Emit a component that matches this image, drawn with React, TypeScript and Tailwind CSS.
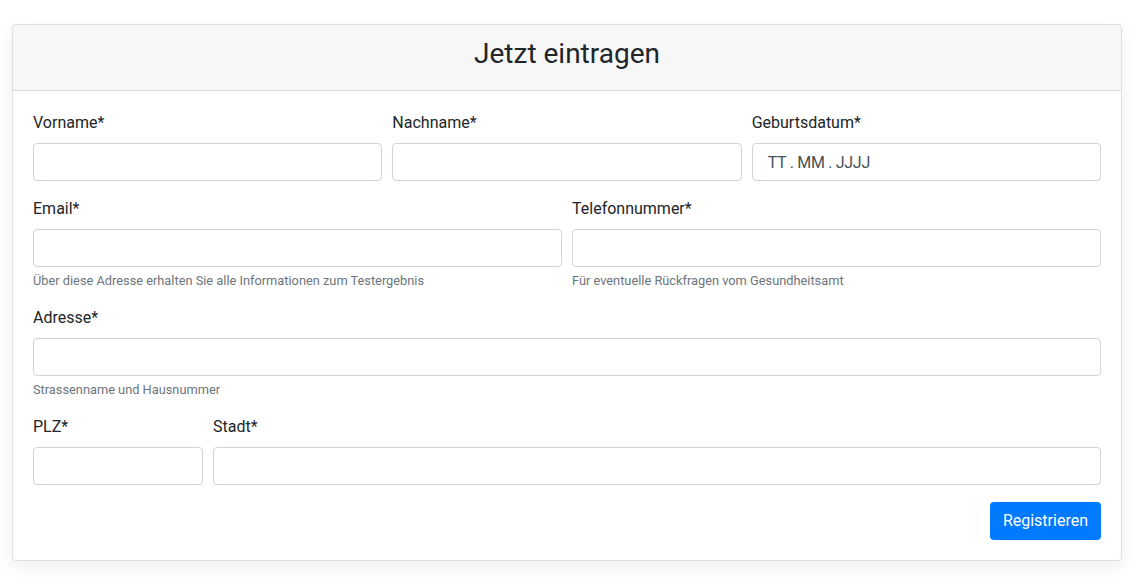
type FieldProps = {
  label: string;
  hint?: string;
  className?: string;
  placeholder?: string;
};

function Field({ label, hint, className = "flex-1", placeholder }: FieldProps) {
  return (
    <div className={`${className} mb-4 flex flex-col`}>
      <label className="mb-2 block text-[16px] leading-6 text-[#212529]">{label}</label>
      <input
        type="text"
        placeholder={placeholder}
        className={`h-[38px] w-full rounded border border-[#ced4da] bg-white text-[16px] text-[#495057] outline-none placeholder:text-[#495057] ${
          placeholder ? "pl-[15px] tracking-[-0.3px]" : "px-3"
        }`}
      />
      {hint && <small className="mt-1 block text-[12.8px] leading-[19.2px] text-[#6c757d]">{hint}</small>}
    </div>
  );
}

export default function App() {
  return (
    <div className="min-h-[583px] bg-white pt-6 font-['Roboto',sans-serif]">
      <div className="ml-[12px] w-[1110px] rounded border border-black/[0.125] bg-white shadow-[0_6px_18px_rgba(0,0,0,0.07)]">
        <div className="h-[66px] rounded-t border-b border-black/[0.125] bg-[#f7f7f7] px-5 pt-3">
          <h3 className="text-center text-[28px] leading-[33.6px] font-normal text-[#212529]">Jetzt eintragen</h3>
        </div>
        <form className="p-5" onSubmit={(e) => e.preventDefault()}>
          <div className="flex gap-2.5">
            <Field label="Vorname*" />
            <Field label="Nachname*" />
            <Field label="Geburtsdatum*" placeholder="TT . MM . JJJJ" />
          </div>
          <div className="flex gap-2.5">
            <Field label="Email*" hint="Über diese Adresse erhalten Sie alle Informationen zum Testergebnis" />
            <Field label="Telefonnummer*" hint="Für eventuelle Rückfragen vom Gesundheitsamt" />
          </div>
          <div className="flex">
            <Field label="Adresse*" hint="Strassenname und Hausnummer" />
          </div>
          <div className="flex gap-2.5">
            <Field label="PLZ*" className="w-[170px]" />
            <Field label="Stadt*" />
          </div>
          <div className="mt-px flex justify-end">
            <button
              type="submit"
              className="h-[38px] rounded bg-[#007bff] px-[13px] text-[16px] leading-6 text-white"
            >
              Registrieren
            </button>
          </div>
        </form>
      </div>
    </div>
  );
}
